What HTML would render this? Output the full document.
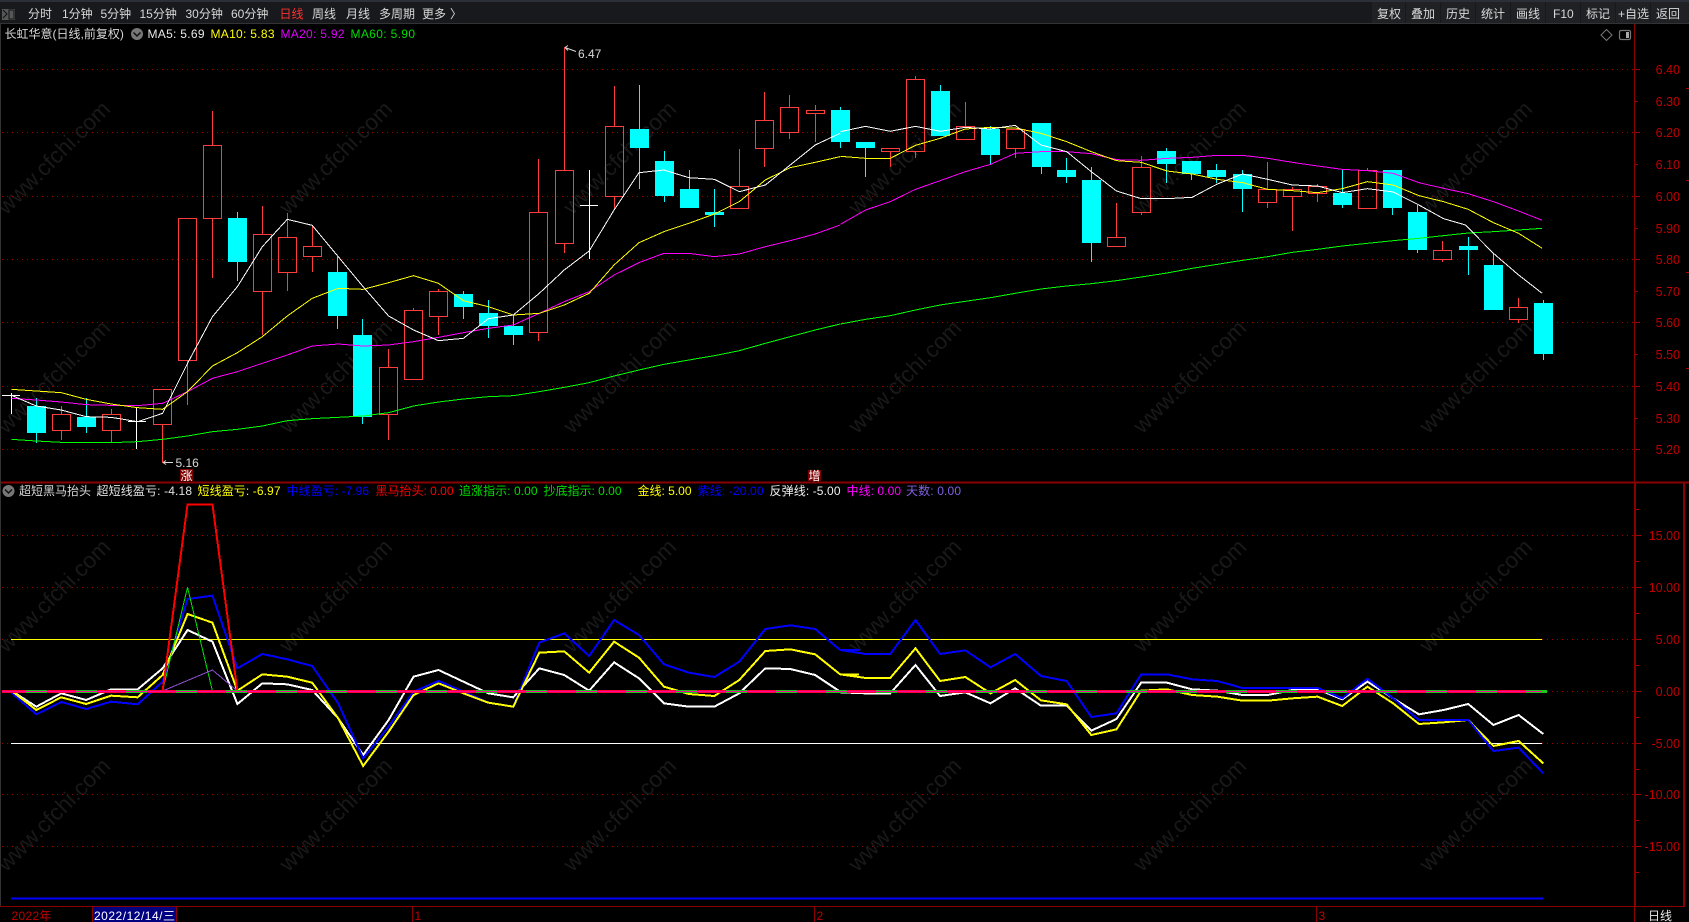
<!DOCTYPE html>
<html lang="zh-CN">
<head>
<meta charset="utf-8">
<title>长虹华意</title>
<style>
html,body{margin:0;padding:0;background:#000;width:1689px;height:922px;overflow:hidden}
svg{display:block}
text{font-family:"Liberation Sans","Noto Sans CJK SC",sans-serif;font-size:12px;dominant-baseline:alphabetic}
.w text{font-size:22.5px;fill:#191919;text-anchor:middle}
.ax text{fill:#c00000;font-size:12.5px;text-anchor:end}
.l polyline{fill:none;vector-effect:non-scaling-stroke;shape-rendering:crispEdges}
.tb text{fill:#d8d8d8}
</style>
</head>
<body>
<svg xmlns="http://www.w3.org/2000/svg" width="1689" height="922" viewBox="0 0 1689 922">
<rect width="1689" height="922" fill="#000"/>

<!-- watermark -->
<g class="w">
<text transform="translate(59,163) rotate(-45)">www.cfchi.com</text>
<text transform="translate(341,163) rotate(-45)">www.cfchi.com</text>
<text transform="translate(625,163) rotate(-45)">www.cfchi.com</text>
<text transform="translate(910,163) rotate(-45)">www.cfchi.com</text>
<text transform="translate(1195,163) rotate(-45)">www.cfchi.com</text>
<text transform="translate(1481,163) rotate(-45)">www.cfchi.com</text>
<text transform="translate(59,382) rotate(-45)">www.cfchi.com</text>
<text transform="translate(341,382) rotate(-45)">www.cfchi.com</text>
<text transform="translate(625,382) rotate(-45)">www.cfchi.com</text>
<text transform="translate(910,382) rotate(-45)">www.cfchi.com</text>
<text transform="translate(1195,382) rotate(-45)">www.cfchi.com</text>
<text transform="translate(1481,382) rotate(-45)">www.cfchi.com</text>
<text transform="translate(59,601) rotate(-45)">www.cfchi.com</text>
<text transform="translate(341,601) rotate(-45)">www.cfchi.com</text>
<text transform="translate(625,601) rotate(-45)">www.cfchi.com</text>
<text transform="translate(910,601) rotate(-45)">www.cfchi.com</text>
<text transform="translate(1195,601) rotate(-45)">www.cfchi.com</text>
<text transform="translate(1481,601) rotate(-45)">www.cfchi.com</text>
<text transform="translate(59,820) rotate(-45)">www.cfchi.com</text>
<text transform="translate(341,820) rotate(-45)">www.cfchi.com</text>
<text transform="translate(625,820) rotate(-45)">www.cfchi.com</text>
<text transform="translate(910,820) rotate(-45)">www.cfchi.com</text>
<text transform="translate(1195,820) rotate(-45)">www.cfchi.com</text>
<text transform="translate(1481,820) rotate(-45)">www.cfchi.com</text>
</g>

<!-- grid -->
<path fill="none" stroke="#9a0000" stroke-width="1" stroke-dasharray="1 4" shape-rendering="crispEdges"
 d="M2 69.5H1634M2 132.5H1634M2 196.5H1634M2 259.5H1634M2 322.5H1634M2 386.5H1634M2 449.5H1634M2 535.5H1634M2 587.5H1634M2 639.5H1634M2 691.5H1634M2 743.5H1634M2 794.5H1634M2 846.5H1634"/>

<!-- candles: red -->
<path fill="none" stroke="#ff3c3c" stroke-width="1" shape-rendering="crispEdges" d="
M61.5 406V414M61.5 431V440M52.5 414.5h18v16h-18z
M111.5 409V414M111.5 431V442M102.5 414.5h18v16h-18z
M162.5 425V463M153.5 389.5h18v35h-18z
M187.5 361V405M178.5 218.5h18v142h-18z
M212.5 111V145M212.5 219V278M203.5 145.5h18v73h-18z
M262.5 206V234M262.5 292V335M253.5 234.5h18v57h-18z
M287.5 213V237M287.5 273V291M278.5 237.5h18v35h-18z
M312.5 226V246M312.5 257V272M303.5 246.5h18v10h-18z
M388.5 349V367M388.5 415V440M379.5 367.5h18v47h-18z
M413.5 308V310M404.5 310.5h18v69h-18z
M438.5 289V291M438.5 317V335M429.5 291.5h18v25h-18z
M538.5 159V212M538.5 333V341M529.5 212.5h18v120h-18z
M564.5 47V170M564.5 244V253M555.5 170.5h18v73h-18z
M614.5 86V126M614.5 197V210M605.5 126.5h18v70h-18z
M739.5 149V186M730.5 186.5h18v22h-18z
M764.5 92V120M764.5 149V167M755.5 120.5h18v28h-18z
M789.5 95V107M789.5 133V139M780.5 107.5h18v25h-18z
M815.5 105V110M815.5 114V142M806.5 110.5h18v3h-18z
M890.5 152V167M881.5 148.5h18v3h-18z
M915.5 76V79M915.5 152V158M906.5 79.5h18v72h-18z
M965.5 102V126M956.5 126.5h18v13h-18z
M1015.5 149V158M1006.5 129.5h18v19h-18z
M1116.5 203V237M1107.5 237.5h18v9h-18z
M1141.5 156V167M1141.5 213V215M1132.5 167.5h18v45h-18z
M1267.5 162V189M1267.5 203V208M1258.5 189.5h18v13h-18z
M1292.5 187V189M1292.5 197V231M1283.5 189.5h18v7h-18z
M1317.5 184V186M1317.5 194V202M1308.5 186.5h18v7h-18z
M1367.5 168V170M1358.5 170.5h18v38h-18z
M1442.5 241V250M1442.5 260V262M1433.5 250.5h18v9h-18z
M1518.5 298V307M1518.5 320V323M1509.5 307.5h18v12h-18z"/>
<!-- candles: cyan wicks -->
<path fill="none" stroke="#00ffff" stroke-width="1" shape-rendering="crispEdges" d="
M36.5 398V443M86.5 398V433M237.5 212V281M337.5 257V329M362.5 319V424M463.5 291V319M488.5 300V338M513.5 315V345
M639.5 85V189M664.5 151V202M689.5 170V208M714.5 189V227M840.5 107V148M865.5 142V177M940.5 85V136M990.5 126V164
M1041.5 123V174M1066.5 158V183M1091.5 167V262M1166.5 148V183M1191.5 161V180M1216.5 164V183M1242.5 170V212
M1342.5 169V208M1392.5 170V215M1417.5 205V253M1468.5 237V275M1493.5 253V310M1543.5 300V360"/>
<!-- candles: cyan bodies -->
<path fill="#00ffff" shape-rendering="crispEdges" d="
M27 406h19v27h-19zM77 417h19v10h-19zM228 218h19v44h-19zM328 272h19v44h-19zM353 335h19v82h-19zM454 294h19v13h-19zM479 313h19v13h-19zM504 326h19v9h-19z
M630 129h19v19h-19zM655 161h19v35h-19zM680 189h19v19h-19zM705 212h19v3h-19zM831 110h19v32h-19zM856 142h19v6h-19zM931 91h19v45h-19zM981 129h19v26h-19z
M1032 123h19v44h-19zM1057 170h19v7h-19zM1082 180h19v63h-19zM1157 151h19v13h-19zM1182 161h19v13h-19zM1207 170h19v7h-19zM1233 174h19v15h-19z
M1333 193h19v12h-19zM1383 170h19v38h-19zM1408 212h19v38h-19zM1459 246h19v4h-19zM1484 265h19v45h-19zM1534 303h19v51h-19z"/>
<!-- doji white -->
<path fill="none" stroke="#fff" stroke-width="1" shape-rendering="crispEdges" d="M11.5 393V414M2 395.5H20M136.5 407V449M128 421.5H146M589.5 170V259M580 205.5H598"/>

<!-- MA lines, left half -->
<g class="l" transform="translate(0,30) scale(.54200,.33333)">
<polyline stroke="#00ff00" stroke-width="1" points="21,1228 67,1233 113,1237 159,1238 205,1238 254,1235 300,1228 346,1218 392,1205 438,1198 484,1188 530,1172 576,1166 624,1162 670,1158 717,1148 763,1128 809,1116 855,1107 901,1100 947,1097 995,1085 1041,1072 1087,1058 1133,1038 1179,1020 1225,1003 1271,990 1318,977 1364,962 1412,940 1458,920 1504,900 1550,882"/>
<polyline stroke="#ff00ff" stroke-width="1" points="21,1105 67,1110 113,1116 159,1124 205,1126 254,1127 300,1120 346,1085 392,1045 438,1025 484,1000 530,975 576,948 624,942 670,948 717,945 763,935 809,922 855,908 901,895 947,885 995,850 1041,815 1087,785 1133,735 1179,698 1225,670 1271,670 1318,680 1364,672 1412,650 1458,632 1504,612 1550,585"/>
<polyline stroke="#ffff00" stroke-width="1" points="21,1078 67,1083 113,1088 159,1108 205,1122 254,1133 300,1138 346,1085 392,1008 438,968 484,920 530,858 576,805 624,775 670,778 717,758 763,737 809,760 855,812 901,830 947,855 995,850 1041,825 1087,790 1133,705 1179,638 1225,605 1271,580 1318,552 1364,515 1412,450 1458,413 1504,397 1550,380"/>
<polyline stroke="#ffffff" stroke-width="1" points="21,1096 67,1128 113,1140 159,1160 205,1162 254,1175 300,1150 346,1000 392,860 438,770 484,650 530,568 576,586 624,680 670,770 717,858 763,900 809,932 855,925 901,866 947,855 995,790 1041,720 1087,663 1133,540 1179,428 1225,420 1271,443 1318,448 1364,485 1412,465 1458,405 1504,345 1550,310"/>
</g>
<!-- MA lines, right half -->
<g class="l" transform="translate(830,30) scale(.54783,.33333)">
<polyline stroke="#00ff00" stroke-width="1" points="19,882 65,868 110,857 156,840 201,825 247,814 293,803 338,790 385,777 432,768 477,761 523,752 568,741 615,729 661,715 707,703 753,691 799,680 844,667 890,658 935,648 981,640 1028,632 1075,625 1120,617 1165,609 1211,605 1257,600 1300,595"/>
<polyline stroke="#ff00ff" stroke-width="1" points="19,583 65,540 110,515 156,478 201,452 247,425 293,403 338,370 385,365 432,365 477,371 523,389 568,391 615,385 661,382 707,376 753,376 799,385 844,397 890,408 935,418 981,422 1028,430 1075,458 1120,475 1165,491 1211,515 1257,543 1300,571"/>
<polyline stroke="#ffff00" stroke-width="1" points="19,379 65,385 110,385 156,346 201,325 247,297 293,292 338,294 385,310 432,335 477,365 523,392 568,397 615,423 661,432 707,448 753,458 799,478 844,482 890,488 935,476 981,455 1028,465 1075,497 1120,515 1165,538 1211,578 1257,610 1300,655"/>
<polyline stroke="#ffffff" stroke-width="1" points="19,305 65,289 110,304 156,289 201,304 247,292 293,297 338,286 385,345 432,365 477,425 523,483 568,506 615,506 661,502 707,462 753,432 799,448 844,465 890,468 935,488 981,476 1028,486 1075,525 1120,566 1160,585 1211,670 1257,735 1300,790"/>
</g>

<!-- high / low annotations -->
<path fill="none" stroke="#d8d8d8" stroke-width="1" d="M565 47.5L576 51.5M565 47.5l3 -2M565 47.5l3 3M163 462.5H173M163 462.5l3 -2M163 462.5l3 2"/>
<text x="578" y="58" fill="#d8d8d8" font-size="12">6.47</text>
<text x="175.5" y="467" fill="#d8d8d8">5.16</text>
<rect x="180" y="469" width="13" height="12" fill="#7c0000"/>
<text x="180.5" y="480" fill="#fff">涨</text>
<rect x="808" y="470" width="13" height="11" fill="#7c0000"/>
<text x="808.5" y="480" fill="#fff">增</text>

<!-- lower pane lines -->
<path fill="none" stroke="#ffff00" stroke-width="1" shape-rendering="crispEdges" d="M11 639.5H1542"/>
<path fill="none" stroke="#ffffff" stroke-width="1" shape-rendering="crispEdges" d="M11 743.5H1542"/>
<path fill="none" stroke="#0000ff" stroke-width="2" shape-rendering="crispEdges" d="M11 898.5H1543"/>

<g class="l" transform="translate(0,480) scale(.54200,.33333)">
<polyline stroke="#ffffff" stroke-width="2" points="21,632 67,680 113,640 159,660 205,628 254,628 300,565 346,450 392,485 438,672 484,610 530,613 576,630 624,715 670,825 717,720 763,590 809,570 855,605 901,640 947,652 995,565 1041,585 1087,632 1133,547 1179,595 1225,670 1271,680 1318,680 1364,640 1412,565 1458,567 1504,585 1550,635"/>
<polyline stroke="#0000ff" stroke-width="2" points="21,638 67,703 113,666 159,687 205,665 254,673 300,605 346,357 392,347 438,565 484,522 530,538 576,558 624,670 670,835 717,740 763,635 809,603 855,635 901,668 947,680 995,488 1041,460 1087,528 1133,420 1179,465 1225,553 1271,578 1318,591 1364,545 1412,447 1458,436 1504,447 1550,510"/>
<polyline stroke="#ffff00" stroke-width="2" points="21,632 67,690 113,652 159,672 205,647 254,652 300,585 346,402 392,428 438,632 484,583 530,590 576,608 624,715 670,858 717,755 763,645 809,610 855,640 901,668 947,680 995,518 1041,514 1087,578 1133,485 1179,533 1225,620 1271,642 1318,648 1364,600 1412,513 1458,508 1504,523 1550,583"/>
<polyline stroke="#00e000" stroke-width="1" points="300,633 346,322 392,633"/>
<polyline stroke="#9050d0" stroke-width="1" points="300,633 392,570 438,633"/>
<polyline stroke="#ff0000" stroke-width="2" points="300,633 346,73 392,73 438,633"/>
</g>
<g class="l" transform="translate(830,480) scale(.54783,.33333)">
<polyline stroke="#ffffff" stroke-width="2" points="19,637 65,640 110,640 156,555 201,648 247,637 293,670 338,625 385,677 432,677 477,752 523,717 568,608 615,608 661,628 707,632 753,645 799,645 844,630 890,628 935,658 981,605 1028,655 1075,703 1120,690 1165,672 1211,735 1257,705 1302,762"/>
<polyline stroke="#ffff00" stroke-width="2" points="19,583 65,594 110,594 156,505 201,603 247,591 293,640 338,600 385,661 432,673 477,765 523,748 568,632 615,628 661,645 707,650 753,662 799,662 844,655 890,650 935,678 981,620 1028,670 1075,732 1120,727 1165,720 1211,798 1257,783 1302,850"/>
<polyline stroke="#0000ff" stroke-width="2" points="19,510 65,522 110,522 156,420 201,522 247,511 293,562 338,522 385,588 432,603 477,711 523,700 568,583 615,583 661,598 707,603 753,624 799,624 844,624 890,624 935,655 981,596 1028,655 1075,720 1120,720 1165,720 1211,813 1257,803 1302,880"/>
</g>
<!-- connector across halves -->
<g class="l" transform="translate(0,480) scale(.54200,.33333)">
<polyline stroke="#ffffff" stroke-width="2" points="1550,635 1585,637"/>
<polyline stroke="#ffff00" stroke-width="2" points="1550,583 1585,583"/>
<polyline stroke="#0000ff" stroke-width="2" points="1550,510 1585,510"/>
</g>

<!-- zero line: red, green dashes, magenta core -->
<path fill="none" stroke="#ff0033" stroke-width="3" shape-rendering="crispEdges" d="M2 691.5H1542"/>
<path fill="none" stroke="#1cc81c" stroke-width="3" stroke-dasharray="21 29" shape-rendering="crispEdges" d="M26 691.5H1553"/>
<path fill="none" stroke="#ff00a0" stroke-width="1" shape-rendering="crispEdges" d="M2 691.5H1542"/>

<!-- axes / frames -->
<path fill="none" stroke="#8a0000" stroke-width="1" shape-rendering="crispEdges" d="M1634.5 24V482"/>
<path fill="none" stroke="#8a0000" stroke-width="2" shape-rendering="crispEdges" d="M0 482.5H1689M1635 482V906M1684 482V906"/>
<path fill="none" stroke="#8a0000" stroke-width="1" shape-rendering="crispEdges" d="M1634.5 906V922M0 906.5H1685M92.5 907V922M176.5 907V922M412.5 907V922M814.5 907V922M1316.5 907V922"/>
<path fill="none" stroke="#333" stroke-width="1" shape-rendering="crispEdges" d="M.5 24V906"/>
<!-- axis ticks -->
<path fill="none" stroke="#a00000" stroke-width="1" shape-rendering="crispEdges" d="
M1635 69.5h5M1635 101.5h3M1635 132.5h5M1635 164.5h3M1635 196.5h5M1635 228.5h3M1635 259.5h5M1635 291.5h3M1635 322.5h5M1635 354.5h3M1635 386.5h5M1635 418.5h3M1635 449.5h5
M1636 509.5h3M1636 535.5h5M1636 561.5h3M1636 587.5h5M1636 613.5h3M1636 639.5h5M1636 665.5h3M1636 691.5h5M1636 717.5h3M1636 743.5h5M1636 769.5h3M1636 794.5h5M1636 820.5h3M1636 846.5h5M1636 872.5h3
M1686 88.5h3M1686 180.5h3M1686 272.5h3M1686 368.5h3"/>
<g class="ax">
<text x="1680" y="74">6.40</text><text x="1680" y="106">6.30</text><text x="1680" y="137">6.20</text><text x="1680" y="169">6.10</text><text x="1680" y="201">6.00</text><text x="1680" y="233">5.90</text><text x="1680" y="264">5.80</text><text x="1680" y="296">5.70</text><text x="1680" y="327">5.60</text><text x="1680" y="359">5.50</text><text x="1680" y="391">5.40</text><text x="1680" y="423">5.30</text><text x="1680" y="454">5.20</text>
<text x="1680" y="540">15.00</text><text x="1680" y="592">10.00</text><text x="1680" y="644">5.00</text><text x="1680" y="696">0.00</text><text x="1680" y="748">-5.00</text><text x="1680" y="799">-10.00</text><text x="1680" y="851">-15.00</text>
</g>

<!-- toolbar -->
<g class="tb">
<rect x="0" y="0" width="1689" height="24" fill="#17191d"/>
<rect x="0" y="0" width="1689" height="2" fill="#2b3038"/>
<rect x="0" y="23" width="1689" height="1" fill="#333"/>
<path d="M2 9h13v11h-13z" fill="#666" opacity=".8"/>
<path d="M3 10l4 4-4 4M9 10v9h5v-9z" fill="none" stroke="#111" stroke-width="1"/>
<text x="28" y="18">分时</text>
<text x="62" y="18">1分钟</text>
<text x="100.5" y="18">5分钟</text>
<text x="139.5" y="18">15分钟</text>
<text x="185.5" y="18">30分钟</text>
<text x="231" y="18">60分钟</text>
<text x="279.5" y="18" style="fill:#ff3030">日线</text>
<text x="312" y="18">周线</text>
<text x="346" y="18">月线</text>
<text x="379" y="18">多周期</text>
<text x="422" y="18">更多</text>
<text x="450" y="18">〉</text>
<!-- buttons -->
<g fill="#1f2125">
<rect x="1372" y="2" width="33" height="21"/><rect x="1406" y="2" width="34" height="21"/><rect x="1441" y="2" width="34" height="21"/><rect x="1476" y="2" width="34" height="21"/><rect x="1511" y="2" width="34" height="21"/><rect x="1546" y="2" width="34" height="21"/><rect x="1581" y="2" width="34" height="21"/><rect x="1616" y="2" width="34" height="21"/><rect x="1651" y="2" width="38" height="21"/>
</g>
<text x="1377" y="18">复权</text>
<text x="1411" y="18">叠加</text>
<text x="1446" y="18">历史</text>
<text x="1481" y="18">统计</text>
<text x="1516" y="18">画线</text>
<text x="1553" y="18">F10</text>
<text x="1586" y="18">标记</text>
<text x="1618" y="18">+自选</text>
<text x="1656" y="18">返回</text>
</g>

<!-- top legend -->
<text x="4.5" y="38" fill="#d8d8d8">长虹华意(日线,前复权)</text>
<circle cx="137" cy="34" r="6" fill="#777"/>
<path d="M133.5 32.5l3.5 3.5 3.5-3.5" fill="none" stroke="#111" stroke-width="1.5"/>
<text x="147.5" y="38" fill="#e8e8e8" textLength="57">MA5: 5.69</text>
<text x="210.5" y="38" fill="#ffff00" textLength="64">MA10: 5.83</text>
<text x="280.5" y="38" fill="#e000ff" textLength="64">MA20: 5.92</text>
<text x="350.5" y="38" fill="#00dd00" textLength="64.5">MA60: 5.90</text>
<!-- top right icons -->
<path d="M1606.5 29.5l5.5 5.5-5.5 5.5-5.5-5.5z" fill="none" stroke="#777" stroke-width="1"/>
<rect x="1619.5" y="30.5" width="11" height="9" rx="1.5" fill="none" stroke="#777" stroke-width="1.2"/>
<rect x="1626" y="32" width="3" height="6" fill="#aaa"/>

<!-- lower legend -->
<circle cx="8.5" cy="491" r="6" fill="#777"/>
<path d="M5 489.5l3.5 3.5 3.5-3.5" fill="none" stroke="#111" stroke-width="1.5"/>
<text x="19" y="495" fill="#d8d8d8" textLength="72">超短黑马抬头</text>
<text x="96.5" y="495" fill="#e0e0e0" textLength="95.5">超短线盈亏: -4.18</text>
<text x="197.5" y="495" fill="#ffff00" textLength="83">短线盈亏: -6.97</text>
<text x="286.5" y="495" fill="#0000ff" textLength="82.5">中线盈亏: -7.96</text>
<text x="375.5" y="495" fill="#ff0000" textLength="78">黑马抬头: 0.00</text>
<text x="459" y="495" fill="#00dd00" textLength="78.5">追涨指示: 0.00</text>
<text x="543.5" y="495" fill="#00dd00" textLength="78">抄底指示: 0.00</text>
<text x="637.5" y="495" fill="#ffff00" textLength="54">金线: 5.00</text>
<text x="697.5" y="495" fill="#0000ff" textLength="66">紫线: -20.00</text>
<text x="769.5" y="495" fill="#f0f0f0" textLength="71">反弹线: -5.00</text>
<text x="846.5" y="495" fill="#ff00ff" textLength="54.5">中线: 0.00</text>
<text x="906" y="495" fill="#8060e0" textLength="55">天数: 0.00</text>

<!-- bottom axis -->
<text x="11.5" y="920" fill="#c00000" textLength="40">2022年</text>
<rect x="93" y="907" width="83" height="15" fill="#000080"/>
<text x="94" y="920" fill="#fff" textLength="81">2022/12/14/三</text>
<text x="414.5" y="920" fill="#c00000">1</text>
<text x="816.5" y="920" fill="#c00000">2</text>
<text x="1318.5" y="920" fill="#c00000">3</text>
<text x="1648" y="920" fill="#e8e8e8">日线</text>
</svg>
</body>
</html>
